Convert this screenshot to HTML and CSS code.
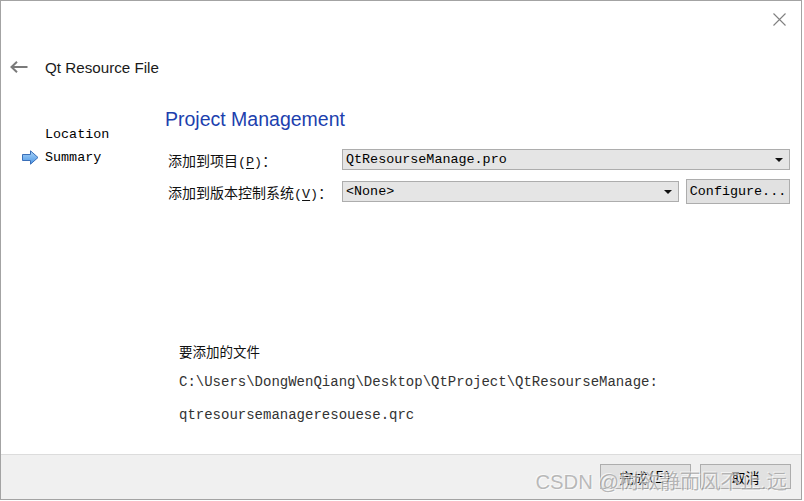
FILE: index.html
```html
<!DOCTYPE html>
<html lang="zh-CN">
<head>
<meta charset="utf-8">
<title>Qt Resource File</title>
<link rel="stylesheet" href="styles.css">
</head>
<body>
<div class="window">
  <div class="topbar">
    <svg class="close" width="13" height="13" viewBox="0 0 13 13"><path d="M0.5 0.5 L12.5 12.5 M12.5 0.5 L0.5 12.5" stroke="#808080" stroke-width="1.1" fill="none"/></svg>
  </div>
  <div class="header">
    <svg class="back" width="18" height="12" viewBox="0 0 18 12"><path d="M1.5 6 H17.5 M7 0.8 L1.5 6 L7 11.2" stroke="#7a7a7a" stroke-width="2" fill="none"/></svg>
    <span class="wtitle">Qt Resource File</span>
  </div>
  <div class="main">
    <div class="sidebar">
      <div class="step"><span class="marker"></span><span>Location</span></div>
      <div class="step"><span class="marker"><svg width="17" height="15" viewBox="0 0 17 15"><defs><linearGradient id="g" x1="0" y1="0" x2="0" y2="1"><stop offset="0" stop-color="#a9d3f7"/><stop offset="1" stop-color="#4c97e6"/></linearGradient></defs><path d="M0.5 4.5 H8.5 V0.8 L16 7.5 L8.5 14.2 V10.5 H0.5 Z" fill="url(#g)" stroke="#3a6fb8" stroke-width="1"/></svg></span><span>Summary</span></div>
    </div>
    <div class="content">
      <h1 class="ptitle">Project Management</h1>
      <div class="form">
        <div class="label">添加到项目<span class="mk">(<u>P</u>)</span>：</div>
        <div class="field">
          <div class="combo wide"><span>QtResourseManage.pro</span><i class="caret"></i></div>
        </div>
        <div class="label">添加到版本控制系统<span class="mk">(<u>V</u>)</span>：</div>
        <div class="field">
          <div class="combo grow"><span>&lt;None&gt;</span><i class="caret"></i></div>
          <div class="btn cfg">Configure...</div>
        </div>
      </div>
      <div class="files">
        <div class="ftitle">要添加的文件</div>
        <div class="path">C:\Users\DongWenQiang\Desktop\QtProject\QtResourseManage:</div>
        <div class="path qrc">qtresoursemanageresouese.qrc</div>
      </div>
    </div>
  </div>
  <div class="footer">
    <div class="btn fbtn">完成<span class="mk">(<u>F</u>)</span></div>
    <div class="btn fbtn">取消</div>
    <div class="watermark">CSDN @树欲静而风不止.远</div>
  </div>
</div>
</body>
</html>
```
FILE: styles.css
```css
* { box-sizing: border-box; }
html, body { margin: 0; padding: 0; background: #fff; }
body { width: 804px; height: 501px; overflow: hidden; font-family: "Liberation Sans", Arial, "Noto Sans CJK SC", sans-serif; color: #000; }

.window {
  width: 802px; height: 500px;
  border: 1px solid #a3a3a3;
  display: flex; flex-direction: column;
  background: #fff;
}

.topbar { height: 37px; display: flex; justify-content: flex-end; padding: 12px 15px 0 0; }
.close { display: block; }

.header { height: 58px; display: flex; align-items: center; padding-left: 9px; }
.back { display: block; margin-right: 17px; }
.wtitle { font-size: 15.2px; color: #1a1a1a; }

.main { flex: 1; display: flex; }
.sidebar { width: 164px; padding-top: 27px; font-family: "Liberation Mono", "Noto Sans CJK SC", monospace; font-size: 13.4px; }
.step { height: 23px; display: flex; align-items: center; }
.marker { width: 44px; padding-left: 21px; display: flex; align-items: center; }
.marker svg { display: block; }

.content { flex: 1; padding: 10px 11px 0 0; display: flex; flex-direction: column; }
.ptitle { margin: 0; font-weight: normal; font-size: 19.5px; line-height: 26px; color: #1d3fae; }

.form { margin-top: 17px; display: grid; grid-template-columns: 177px 1fr; row-gap: 9px; align-items: center; }
.label { padding-left: 3px; font-family: "Noto Sans CJK SC", sans-serif; font-size: 14px; color: #111; }
.mk { font-family: "Liberation Mono", monospace; font-size: 13.4px; }
.mk u { text-underline-offset: 2px; }
.field { display: flex; align-items: center; gap: 7px; min-height: 21px; }
.combo {
  height: 21px; border: 1px solid #adadad; background: #e5e5e5;
  display: flex; align-items: center; justify-content: space-between;
  padding: 0 6px 0 3px;
  font-family: "Liberation Mono", monospace; font-size: 13.4px; color: #000;
}
.wide { flex: 1; }
.grow { flex: 1; }
.caret { width: 0; height: 0; border-left: 4px solid transparent; border-right: 4px solid transparent; border-top: 4px solid #111; }
.btn {
  height: 25px; border: 1px solid #adadad; background: #e1e1e1;
  display: flex; align-items: center; justify-content: center;
  font-size: 13.4px;
}
.cfg { width: 104px; font-family: "Liberation Mono", monospace; }

.files { margin-top: 137px; padding-left: 14px; }
.ftitle { font-family: "Noto Sans CJK SC", sans-serif; font-size: 13.5px; line-height: 20px; color: #111; }
.path { margin-top: 11px; font-family: "Liberation Mono", monospace; font-size: 14px; line-height: 20px; color: #333; }
.qrc { margin-top: 13px; }

.footer {
  height: 45px; border-top: 1px solid #dcdcdc; background: #f0f0f0;
  display: flex; justify-content: flex-end; align-items: flex-start; gap: 9px;
  padding: 9px 10px 0 0; position: relative;
}
.fbtn { width: 91px; font-family: "Noto Sans CJK SC", sans-serif; font-size: 14px; }
.watermark {
  position: absolute; right: 14px; top: 15px;
  font-family: "Liberation Sans", "Noto Sans CJK SC", sans-serif; font-size: 20.3px; line-height: 24px;
  color: rgba(130,130,130,0.55);
  text-shadow: 1px 1px 0 rgba(255,255,255,0.6), -1px -1px 0 rgba(255,255,255,0.6);
  white-space: nowrap; pointer-events: none;
}
```
